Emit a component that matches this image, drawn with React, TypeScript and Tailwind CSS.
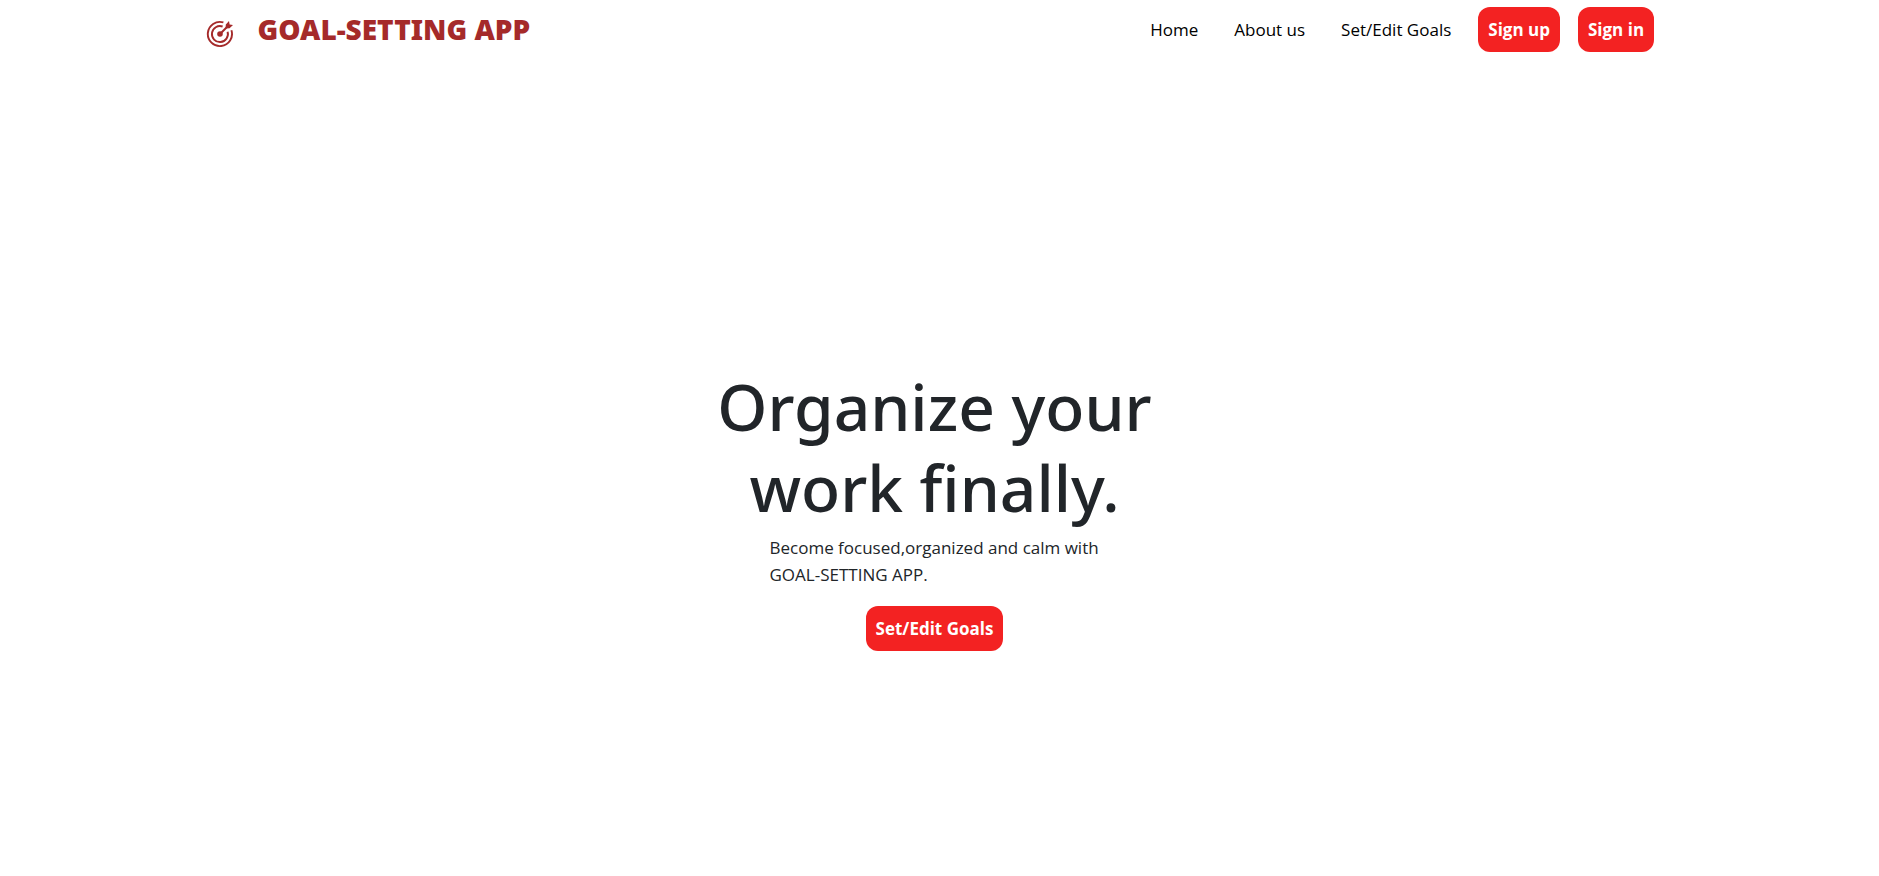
const buttonClass =
  "flex items-center rounded-xl bg-[#f32222] px-2.5 py-2 text-[17px] leading-[29px] font-bold text-white";

function TargetIcon() {
  return (
    <svg className="mt-2 size-7" viewBox="0 0 28 28" fill="none" stroke="currentColor" strokeWidth="1.9" aria-hidden="true">
      <path d="M17.4 2.4A12.1 12.1 0 1 0 25.4 10.2" />
      <path d="M16.6 6.5A8 8 0 1 0 21.6 11.8" />
      <circle cx="14" cy="14" r="2.8" fill="currentColor" stroke="none" />
      <path d="M14 14L23 5" strokeWidth="2" />
      <path d="M19.6 8.4L19.8 4.4L23 1L23.6 4.4L27 5L23.6 8.2Z" fill="currentColor" stroke="none" />
    </svg>
  );
}

export default function App() {
  return (
    <div className="flex min-h-screen flex-col bg-white pr-2.5 font-['Open_Sans','Noto_Sans',sans-serif] text-[#212529]">
      <header className="flex items-center justify-between pt-[7px] pr-[11.5%] pl-[11%]">
        <a href="#home" className="flex items-center gap-6 text-[#a52a2a]">
          <TargetIcon />
          <span className="font-['Noto_Sans','Open_Sans',sans-serif] text-[28px] leading-[45px] font-black">GOAL-SETTING APP</span>
        </a>
        <nav className="flex items-center text-[17px] leading-[27px] text-black">
          <a href="#home" className="px-[18px]">Home</a>
          <a href="#about" className="px-[18px]">About us</a>
          <a href="#goals" className="pr-[27px] pl-[18px]">Set/Edit Goals</a>
          <div className="flex gap-[18px]">
            <button type="button" className={buttonClass}>Sign up</button>
            <button type="button" className={buttonClass}>Sign in</button>
          </div>
        </nav>
      </header>
      <main className="flex grow flex-col items-center pt-[314px] pb-8">
        <h1 className="w-[480px] text-center font-['Noto_Sans','Open_Sans',sans-serif] text-[64px] leading-[81px] font-medium">
          Organize your work finally.
        </h1>
        <p className="mt-1.5 mb-[18px] w-[330px] text-[17px] leading-[27px]">
          Become focused,organized and calm with GOAL-SETTING APP.
        </p>
        <button type="button" className={buttonClass}>Set/Edit Goals</button>
      </main>
    </div>
  );
}
